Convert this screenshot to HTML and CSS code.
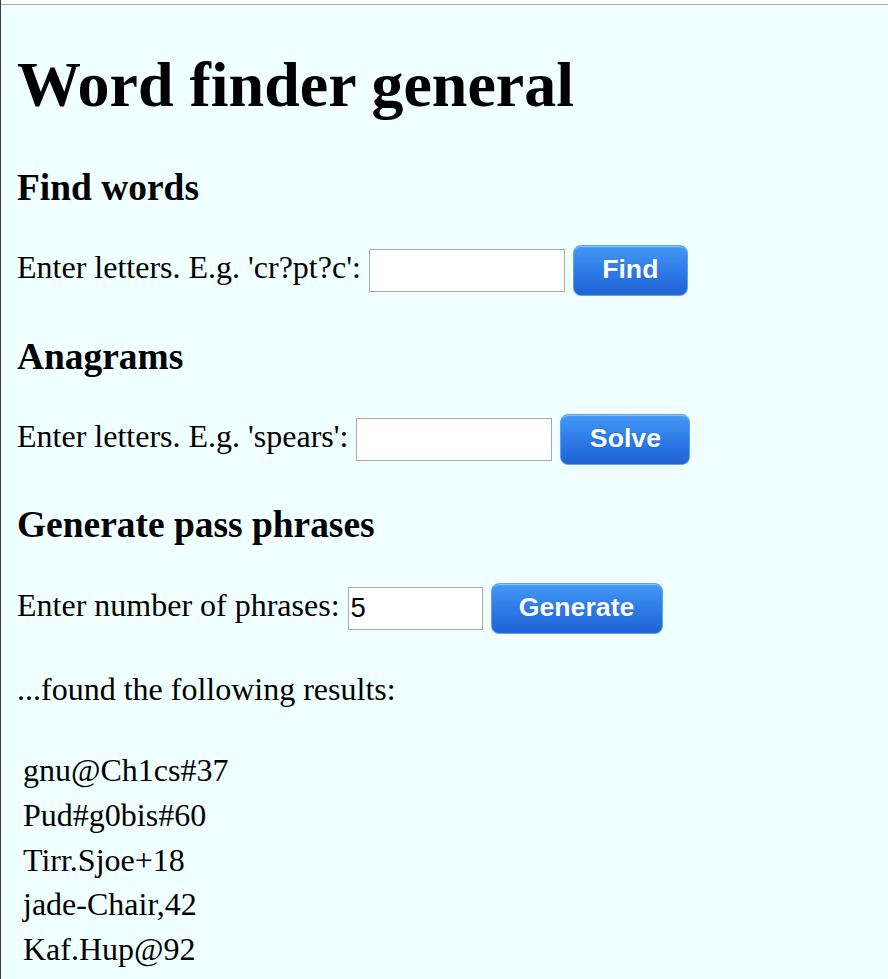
FILE: index.html
```html
<!DOCTYPE html>
<html>
<head>
<meta charset="utf-8">
<title>Word finder general</title>
<link rel="stylesheet" href="styles.css">
</head>
<body>
<div class="edge-mark"></div>
<main class="page">
  <h1 class="title">Word finder general</h1>

  <h3 class="section-title">Find words</h3>
  <form class="row">
    <label class="label">Enter letters. E.g. 'cr?pt?c':</label>
    <input class="field field-wide" type="text">
    <button class="btn btn-find" type="button">Find</button>
  </form>

  <h3 class="section-title">Anagrams</h3>
  <form class="row">
    <label class="label">Enter letters. E.g. 'spears':</label>
    <input class="field field-wide" type="text">
    <button class="btn btn-solve" type="button">Solve</button>
  </form>

  <h3 class="section-title">Generate pass phrases</h3>
  <form class="row">
    <label class="label">Enter number of phrases:</label>
    <input class="field field-num" type="text" value="5">
    <button class="btn btn-generate" type="button">Generate</button>
  </form>

  <p class="found">...found the following results:</p>

  <table class="results">
    <tr><td>gnu@Ch1cs#37</td></tr>
    <tr><td>Pud#g0bis#60</td></tr>
    <tr><td>Tirr.Sjoe+18</td></tr>
    <tr><td>jade-Chair,42</td></tr>
    <tr><td>Kaf.Hup@92</td></tr>
  </table>
</main>
</body>
</html>
```

FILE: styles.css
```css
html {
  background: #ffffff;
  padding-top: 4px;
  border-left: 1px solid #3c3c3c;
}
body {
  margin: 0;
  min-height: 975px;
  background: #f0ffff;
  border-top: 1px solid #a8a8a8;
  font-family: "Liberation Serif", "Times New Roman", serif;
  font-size: 32px;
  line-height: 1.15;
  color: #000;
  position: relative;
}
.edge-mark {
  position: absolute;
  left: -1px;
  top: 7px;
  width: 1px;
  height: 24px;
  background: #a4a4a4;
}
.page {
  padding: 0 16px;
  display: flow-root;
}
.title {
  font-size: 64px;
  font-weight: bold;
  line-height: 1.15;
  margin: 43px 0 0 0;
}
.section-title {
  font-size: 37.44px;
  font-weight: bold;
  line-height: 1.15;
  margin: 44px 0 0 0;
}
.section-title + .row {
  margin-top: 36px;
}
.row + .section-title {
  margin-top: 37.5px;
}
.row {
  display: flex;
  align-items: flex-start;
  height: 52.4px;
}
.label {
  margin-top: 4.8px;
  margin-right: 8px;
  white-space: nowrap;
}
.field {
  box-sizing: border-box;
  height: 43px;
  margin-top: 4px;
  margin-right: 8px;
  border: 1px solid #a9a9a9;
  background: #fff;
  font-family: "Liberation Sans", Arial, sans-serif;
  font-size: 27.5px;
  padding: 0 2px;
  color: #000;
  outline: none;
}
.field-wide { width: 196px; }
.field-num { width: 135px; }
.btn {
  box-sizing: border-box;
  height: 51px;
  border: 1px solid #5fa2f3;
  border-radius: 8px;
  background: linear-gradient(#4499f6, #2e7be7 50%, #1f63d5);
  color: #fff;
  font-family: "Liberation Sans", Arial, sans-serif;
  font-weight: bold;
  font-size: 26.67px;
  box-shadow: inset 0 2px 1px -1px rgba(255,255,255,0.45);
  text-shadow: 0 0 1px rgba(20,60,150,0.5);
  padding: 0 0 2px 0;
}
.btn-find { width: 115px; }
.btn-solve { width: 130px; }
.btn-generate { width: 172px; }
.found {
  margin: 36.4px 0 0 0;
}
.results {
  margin-top: 38px;
  border-spacing: 4px;
  margin-left: 0;
}
.results td {
  padding: 2px;
}
```
